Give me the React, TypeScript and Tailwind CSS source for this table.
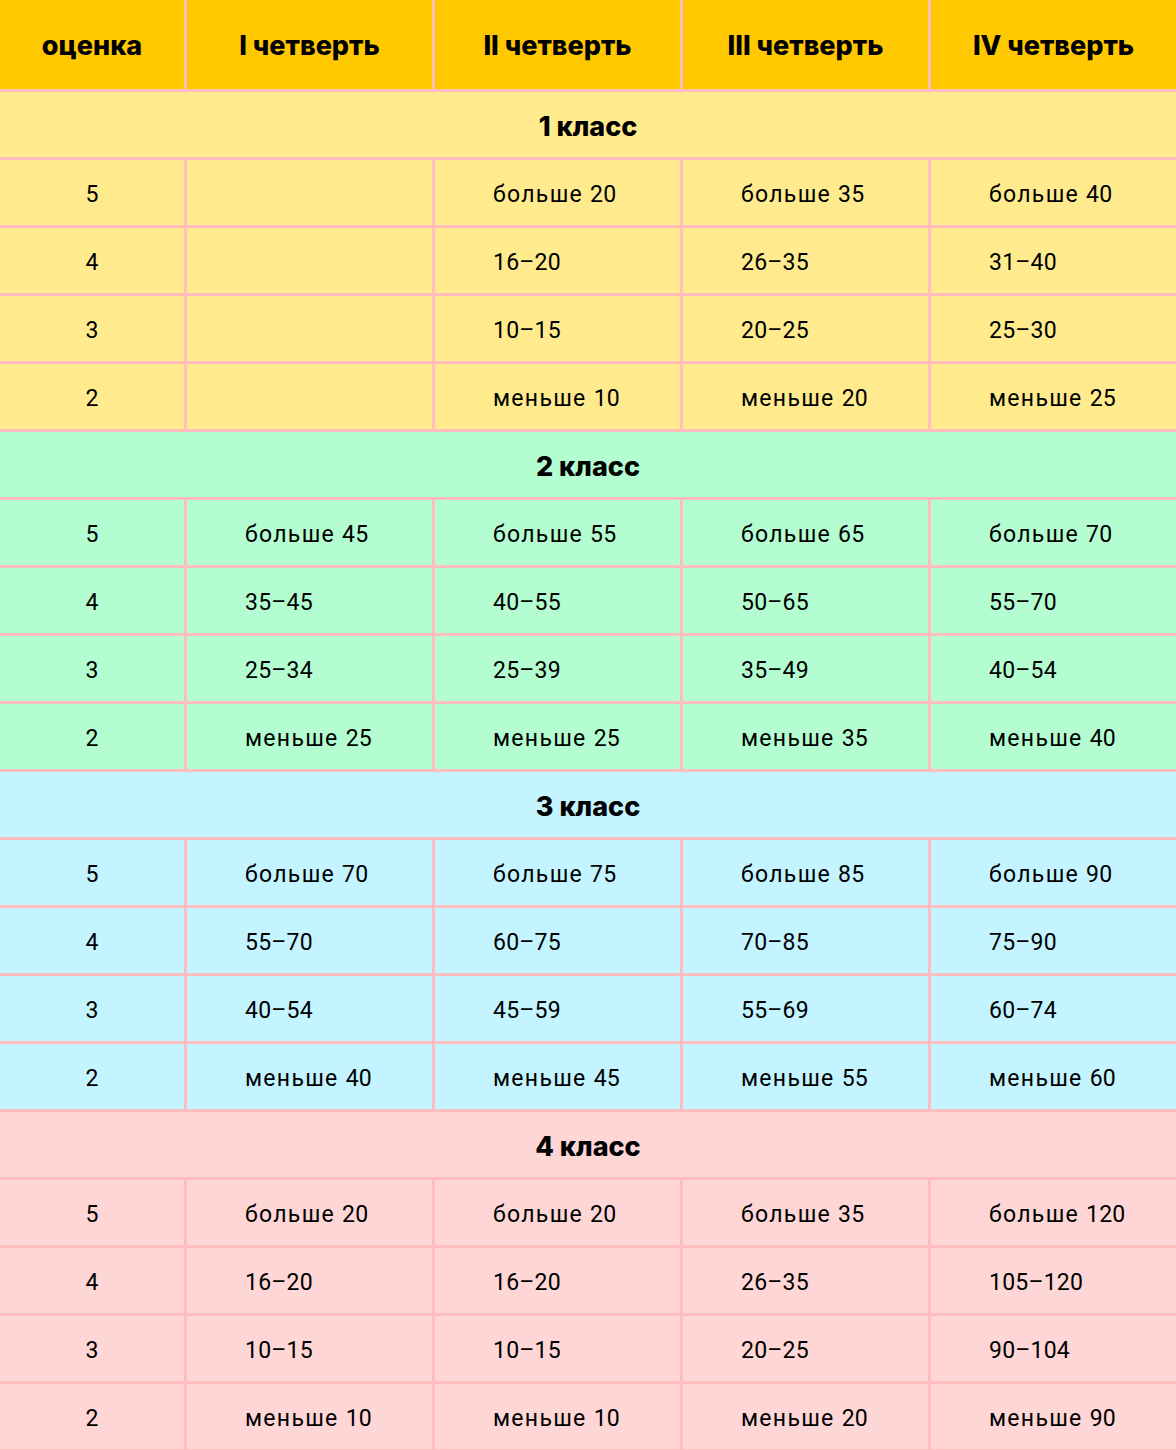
import React from "react";

type Section = { title: string; bg: string; rows: [string, string, string, string, string][] };

const sections: Section[] = [
  {
    title: "1 класс",
    bg: "bg-[#ffeb8e]",
    rows: [
      ["5", "", "больше 20", "больше 35", "больше 40"],
      ["4", "", "16–20", "26–35", "31–40"],
      ["3", "", "10–15", "20–25", "25–30"],
      ["2", "", "меньше 10", "меньше 20", "меньше 25"],
    ],
  },
  {
    title: "2 класс",
    bg: "bg-[#b3fdd0]",
    rows: [
      ["5", "больше 45", "больше 55", "больше 65", "больше 70"],
      ["4", "35–45", "40–55", "50–65", "55–70"],
      ["3", "25–34", "25–39", "35–49", "40–54"],
      ["2", "меньше 25", "меньше 25", "меньше 35", "меньше 40"],
    ],
  },
  {
    title: "3 класс",
    bg: "bg-[#c3f4ff]",
    rows: [
      ["5", "больше 70", "больше 75", "больше 85", "больше 90"],
      ["4", "55–70", "60–75", "70–85", "75–90"],
      ["3", "40–54", "45–59", "55–69", "60–74"],
      ["2", "меньше 40", "меньше 45", "меньше 55", "меньше 60"],
    ],
  },
  {
    title: "4 класс",
    bg: "bg-[#ffd6d6]",
    rows: [
      ["5", "больше 20", "больше 20", "больше 35", "больше 120"],
      ["4", "16–20", "16–20", "26–35", "105–120"],
      ["3", "10–15", "10–15", "20–25", "90–104"],
      ["2", "меньше 10", "меньше 10", "меньше 20", "меньше 90"],
    ],
  },
];

const headers = ["оценка", "I четверть", "II четверть", "III четверть", "IV четверть"];

function CellText({ text }: { text: string }) {
  const m = text.match(/^([^\d]+ )(.*)$/);
  if (!m) return <span className="tracking-[0.2px]">{text}</span>;
  return (
    <span>
      <span className="tracking-[1.3px]">{m[1]}</span>
      <span className="tracking-[0.2px]">{m[2]}</span>
    </span>
  );
}

export default function App() {
  return (
    <div className="w-[1176px] h-[1450px] bg-[#ffbdbd] overflow-hidden">
      <div className="grid grid-cols-[184px_245px_245px_245px_1fr] gap-[3px]">
        {headers.map((h) => (
          <div
            key={h}
            className="h-[89px] pt-[4px] bg-[#ffc800] flex items-center justify-center text-[27px] font-extrabold text-black [font-family:Inter,'Noto_Sans',sans-serif]"
          >
            {h}
          </div>
        ))}
        {sections.map((s) => (
          <React.Fragment key={s.title}>
            <div
              className={`col-span-5 h-[65px] pt-[5px] ${s.bg} flex items-center justify-center text-[27px] font-extrabold text-black [font-family:Inter,'Noto_Sans',sans-serif]`}
            >
              {s.title}
            </div>
            {s.rows.map((r, i) => (
              <React.Fragment key={i}>
                {r.map((c, j) => (
                  <div
                    key={j}
                    className={`h-[65px] pt-[5px] ${s.bg} flex items-center text-[23px] text-black [font-family:Roboto,sans-serif] ${
                      j === 0 ? "justify-center" : "pl-[58px]"
                    }`}
                  >
                    <CellText text={c} />
                  </div>
                ))}
              </React.Fragment>
            ))}
          </React.Fragment>
        ))}
      </div>
    </div>
  );
}
